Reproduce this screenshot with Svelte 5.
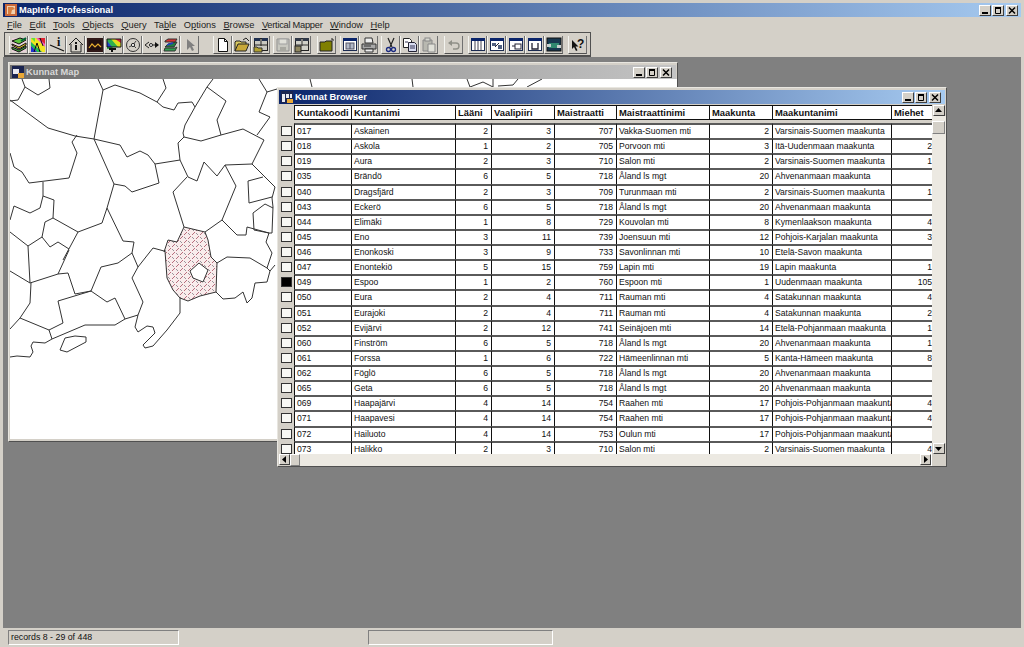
<script>
	const menu = [
		['', 'F', 'ile'], ['', 'E', 'dit'], ['', 'T', 'ools'], ['', 'O', 'bjects'], ['', 'Q', 'uery'],
		['Ta', 'b', 'le'], ['O', 'p', 'tions'], ['', 'B', 'rowse'], ['', 'V', 'ertical Mapper'],
		['', 'W', 'indow'], ['', 'H', 'elp']
	];

	const navy = '#0a246a';
	const win = (inner) =>
		`<rect x="1.5" y="1.5" width="13" height="12" fill="#fff" stroke="#1a2a50"/><rect x="1" y="1" width="14" height="3" fill="${navy}"/>${inner}`;

	const icons = {
		layers: `<rect x="1" y="1" width="14" height="14" fill="#e8d0d8"/><path d="M1 4 9 1l6 2-7 4z" fill="#60c840" stroke="#111"/><path d="M1 7l7 3 7-4v2l-7 4-7-4z" fill="#e8d020" stroke="#111"/><path d="M1 10l7 3 7-4v2l-7 4-7-3z" fill="#40a040" stroke="#111"/><path d="M10 4l5-3" stroke="#063" stroke-width="2"/>`,
		rainbow: `<rect x="1" y="1" width="14" height="14" fill="#f060c0"/><path d="M1 1h5l9 9v5h-3L1 5z" fill="#f0e820"/><path d="M1 5l11 10H7L1 9z" fill="#20c050"/><path d="M1 9l6 6H1z" fill="#2030d0"/><path d="M8 1h7v6z" fill="#e02030"/><path d="M1 1h4v4z" fill="#60e040"/><path d="M4 15 7 6l3 9M10 1l3 8" stroke="#111" fill="none"/>`,
		linei: `<path d="M1 8l14 6" stroke="#111" stroke-width="1.3"/><text x="8" y="9" font-family="Liberation Serif" font-weight="bold" font-size="12" fill="#111">i</text>`,
		house: `<path d="M1 8l7-7 7 7M3 7v8h10V7" fill="none" stroke="#222"/><rect x="7" y="5" width="2" height="2" fill="#111"/><rect x="7" y="8" width="2" height="5" fill="#111"/>`,
		chart: `<rect x="0" y="1" width="16" height="14" fill="#301818"/><rect x="2" y="3" width="12" height="10" fill="#201010"/><path d="M2 11l3-4 3 3 3-3 3 3" fill="none" stroke="#e8b030" stroke-width="1.2"/>`,
		mappin: `<path d="M1 2h14v8H7L5 12H1z" fill="#30b050"/><path d="M5 2h6l4 4v4h-3z" fill="#e0e020"/><path d="M9 2h6v4z" fill="#e02040"/><path d="M1 4l5 6H1z" fill="#2040d0"/><path d="M1 2h14v8H1z" fill="none" stroke="#111"/><path d="M3 11h7v2H7v2H5v-2H3z" fill="#111"/>`,
		circle: `<circle cx="8" cy="8" r="6.5" fill="none" stroke="#333"/><path d="M4 10l4-2 3-4M8 8l3 3" stroke="#444" fill="none"/><circle cx="8" cy="8" r="1.6" fill="#fff" stroke="#222"/>`,
		nodes: `<path d="M5 5 1 8l4 3M5 8h9" fill="none" stroke="#222"/><circle cx="7" cy="8" r="1.5" fill="#fff" stroke="#222"/><path d="M11 5l4 3-4 3z" fill="#111"/>`,
		stack: `<path d="M2 4l3-2h9l-2 3H2z" fill="#d83030" stroke="#333"/><path d="M9 6l5-1-3 5H2l3-3z" fill="#208040" stroke="#333"/><path d="M2 11h10l2-1-2 4H1z" fill="#30a050" stroke="#333"/><path d="M4 8l6-2" stroke="#2040c0" stroke-width="1.5"/>`,
		cursor: `<path d="M5 2v11l3-3 2 4 2-1-2-4h3z" fill="#808080"/>`,
		newdoc: `<path d="M3.500 1.500h6l3 3v10h-9z" fill="#fff" stroke="#111"/><path d="M9.500 1.500v3h3" fill="none" stroke="#111"/>`,
		open: `<path d="M1 14V5l1-1h4l1 1h5v2" fill="#d8c860" stroke="#222"/><path d="M1 14l3-7h11l-3 7z" fill="#c8a838" stroke="#222"/><path d="M9 3l3-2 3 3" fill="none" stroke="#222"/>`,
		works: `<rect x="1.500" y="1.500" width="13" height="12" fill="#c8c8c0" stroke="#222"/><path d="M1 1h6v3H1zM9 1h6v3H9z" fill="#203050"/><path d="M1 8h14" stroke="#222"/><path d="M8 1v8" stroke="#222"/><path d="M1 15v-5h3l1 1h4v4z" fill="#b0a030" stroke="#333"/>`,
		save: `<path d="M2 2h12v12H2z" fill="#c8c8c0" stroke="#909090"/><rect x="4" y="2" width="8" height="5" fill="#e0e0d8" stroke="#a0a0a0"/><rect x="5" y="10" width="6" height="4" fill="#a8a8a0"/>`,
		worksave: `<rect x="1.500" y="1.500" width="13" height="12" fill="#d0d0c8" stroke="#222"/><path d="M1 1h6v3H1zM9 1h6v3H9z" fill="#303848"/><path d="M1 8h14M8 1v8" stroke="#333"/><rect x="1" y="9" width="6" height="6" fill="#908860" stroke="#222"/>`,
		folder: `<path d="M1 14V5h5l1-1h6v10z" fill="#808000" stroke="#222"/><path d="M13 1v2M15 3h-2" stroke="#222"/>`,
		gridwin: win(`<rect x="4" y="6" width="8" height="6" fill="#b0b8c8" stroke="#556"/><path d="M8 6v6" stroke="#556"/>`),
		printer: `<path d="M4 1h7l1 5H4z" fill="#eee" stroke="#333"/><path d="M1 7h14v5H1z" fill="#a8a8a8" stroke="#333"/><path d="M4 12h8v3H4z" fill="#eee" stroke="#333"/><path d="M3 9h7" stroke="#333"/>`,
		scissors: `<path d="M5 1l4 9M11 1 7 10" stroke="#222" stroke-width="1.2"/><circle cx="5.500" cy="12.500" r="2" fill="none" stroke="#1a2a80" stroke-width="1.3"/><circle cx="10.500" cy="12.500" r="2" fill="none" stroke="#1a2a80" stroke-width="1.3"/>`,
		copy: `<path d="M1.500 1.500h6l2 2v7h-8z" fill="#fff" stroke="#222"/><path d="M6.500 5.500h6l2 2v7h-8z" fill="#d8dcf0" stroke="#223"/><path d="M8 9h5M8 11h5M3 5h3" stroke="#335"/>`,
		paste: `<path d="M2 3h9v11H2z" fill="#b8b8b0" stroke="#888"/><rect x="4" y="1" width="5" height="3" fill="#d8d8d0" stroke="#888"/><path d="M7 7h7v8H7z" fill="#e0e0d8" stroke="#888"/>`,
		undo: `<path d="M3 6h7q3 0 3 3t-3 3H7" fill="none" stroke="#909088" stroke-width="1.4"/><path d="M6 3 2 6l4 3z" fill="#909088"/>`,
		win1: win(`<path d="M8 4v9M5 4v9M11 4v9" stroke="#445"/>`),
		win2: win(`<path d="M3 6h4v3H3zM9 8h4v4H9z" fill="#506080"/><path d="M6 10l4-4" stroke="#223"/>`),
		win3: win(`<rect x="7" y="7" width="6" height="5" fill="#fff" stroke="#223"/><path d="M4 9h3" stroke="#223"/>`),
		win4: win(`<path d="M5 6v6h6V6" fill="none" stroke="#223" stroke-width="1.3"/>`),
		win5: `<rect x="1" y="1" width="14" height="13" fill="#183850" stroke="#111"/><rect x="3" y="6" width="10" height="5" fill="#308870"/><rect x="1" y="7" width="4" height="3" fill="#c8d0d0"/><rect x="11" y="8" width="4" height="3" fill="#c8d0d0"/>`,
		help: `<path d="M2 3v9l2-2 2 4 1.500-.8-2-3.700h3z" fill="#111"/><text x="7" y="11" font-family="Liberation Sans" font-weight="bold" font-size="12" fill="#111">?</text>`
	};

	const groups = [
		{ cls: 'g0', items: ['layers', 'rainbow', 'linei', 'house', 'chart', 'mappin', 'circle', 'nodes', 'stack', 'cursor'] },
		{ cls: 'g1', items: ['newdoc', 'open', 'works'] },
		{ cls: 'g2', items: ['save', 'worksave'] },
		{ cls: 'g3', items: ['folder'] },
		{ cls: 'g4', items: ['gridwin', 'printer'] },
		{ cls: 'g5', items: ['scissors', 'copy', 'paste'] },
		{ cls: 'g6', items: ['undo'] },
		{ cls: 'g7', items: ['win1', 'win2', 'win3', 'win4', 'win5'] },
		{ cls: 'g8', items: ['help'] }
	];

	const VS = 'Varsinais-Suomen maakunta';
	const AH = 'Ahvenanmaan maakunta';
	const PP = 'Pohjois-Pohjanmaan maakunta';
	const AL = 'Åland ls mgt';
	const rows = [
		['017', 'Askainen', 2, 3, 707, 'Vakka-Suomen mti', 2, VS, ''],
		['018', 'Askola', 1, 2, 705, 'Porvoon mti', 3, 'Itä-Uudenmaan maakunta', '2'],
		['019', 'Aura', 2, 3, 710, 'Salon mti', 2, VS, '1'],
		['035', 'Brändö', 6, 5, 718, AL, 20, AH, ''],
		['040', 'Dragsfjärd', 2, 3, 709, 'Turunmaan mti', 2, VS, '1'],
		['043', 'Eckerö', 6, 5, 718, AL, 20, AH, ''],
		['044', 'Elimäki', 1, 8, 729, 'Kouvolan mti', 8, 'Kymenlaakson maakunta', '4'],
		['045', 'Eno', 3, 11, 739, 'Joensuun mti', 12, 'Pohjois-Karjalan maakunta', '3'],
		['046', 'Enonkoski', 3, 9, 733, 'Savonlinnan mti', 10, 'Etelä-Savon maakunta', ''],
		['047', 'Enontekiö', 5, 15, 759, 'Lapin mti', 19, 'Lapin maakunta', '1'],
		['049', 'Espoo', 1, 2, 760, 'Espoon mti', 1, 'Uudenmaan maakunta', '105'],
		['050', 'Eura', 2, 4, 711, 'Rauman mti', 4, 'Satakunnan maakunta', '4'],
		['051', 'Eurajoki', 2, 4, 711, 'Rauman mti', 4, 'Satakunnan maakunta', '2'],
		['052', 'Evijärvi', 2, 12, 741, 'Seinäjoen mti', 14, 'Etelä-Pohjanmaan maakunta', '1'],
		['060', 'Finström', 6, 5, 718, AL, 20, AH, '1'],
		['061', 'Forssa', 1, 6, 722, 'Hämeenlinnan mti', 5, 'Kanta-Hämeen maakunta', '8'],
		['062', 'Föglö', 6, 5, 718, AL, 20, AH, ''],
		['065', 'Geta', 6, 5, 718, AL, 20, AH, ''],
		['069', 'Haapajärvi', 4, 14, 754, 'Raahen mti', 17, PP, '4'],
		['071', 'Haapavesi', 4, 14, 754, 'Raahen mti', 17, PP, '4'],
		['072', 'Hailuoto', 4, 14, 753, 'Oulun mti', 17, PP, ''],
		['073', 'Halikko', 2, 3, 710, 'Salon mti', 2, VS, '4']
	];
	const headers = ['Kuntakoodi', 'Kuntanimi', 'Lääni', 'Vaalipiiri', 'Maistraatti', 'Maistraattinimi', 'Maakunta', 'Maakuntanimi', 'Miehet'];
	const numeric = [false, false, true, true, true, false, true, false, true];

	// boundary lines, in page pixels
	const borders = [
		'22,79 25,87 38,95 50,88 49,79', '25,87 18,100 10,101',
		'10,100 48,128 75,136 94,139', '98,79 103,90 94,139',
		'103,90 115,85 140,93 157,102 163,107 174,110 178,103 192,102 195,107 185,125 183,133 184,137',
		'157,102 166,88 163,79', '213,79 207,87 195,107', '207,87 226,101 217,120 221,135',
		'184,137 201,141 221,135 243,129 264,140 252,164 225,165 217,176 204,162 197,181 188,177 180,160 178,143 184,137',
		'259,79 267,92 277,89', '267,92 259,112 270,117 257,135',
		'94,139 120,145 127,157 140,151 148,155 155,164 159,183 132,192 125,186 114,184 94,139', '155,164 180,160',
		'77,135 72,142 77,153 69,178 29,183 22,172 14,167 10,153',
		'43,182 43,196 54,200 53,218', '43,196 40,208 30,213 14,206 10,220',
		'114,184 107,208 102,223 78,232 63,260', '53,218 78,232', '53,218 45,222 42,237 28,246 10,232',
		'42,237 50,247 58,242 69,249', '107,208 123,241 134,242 132,253',
		'28,246 30,283', '10,271 30,283 58,274 68,273 75,294 91,291 107,302 115,298 125,319 138,315',
		'58,274 69,250', '91,291 101,267 118,263 132,253 138,267',
		'138,267 132,278 143,302 138,315', '138,267 153,248 164,251', '91,291 58,301 63,323 49,330 20,318 30,303 31,283',
		'20,318 10,329', '49,330 52,339',
		'10,357 17,356 30,357 33,352 31,346 33,342 45,343 52,339 85,325 103,325 115,325 125,319',
		'138,315 135,327 138,332 147,326 153,327 155,333 143,345 145,348 153,346 167,330 180,313 180,298',
		'173,192 187,177', '173,192 184,227', '205,232 222,220 236,186 225,165',
		'252,164 275,187 272,198 273,207 272,233 269,233 247,227 246,235 237,235 222,220',
		'248,181 263,177', '248,181 249,203 272,197', '253,213 265,204 273,208', '253,213 254,230 269,233',
		'269,233 266,242 272,253 267,268', '217,263 227,257 250,258 267,268 270,271 275,265',
		'270,271 267,282 255,283 252,298 247,303 243,292 235,298 223,299 216,292',
		'310,79 312,87', '412,79 413,87', '467,79 470,87 483,82 493,87', '493,79 493,87', '498,86 513,85 518,79', '527,87 542,79'
	];
	const island = '60,350 65,338 75,336 86,337 86,342 67,352';
	const espoo = '184,227 205,232 208,240 211,257 217,263 216,292 200,296 188,301 180,298 173,290 167,278 165,251 164,252 168,240 177,242';
	const hole = '199,263 208,270 203,282 193,278 190,271';
</script>

{#snippet controls()}
	<div class="controls">
		<span class="ctl"><svg viewBox="0 0 10 9"><rect x="2" y="6" width="6" height="2" fill="#000" /></svg></span>
		<span class="ctl gapped"><svg viewBox="0 0 10 9"><path d="M2.500 1.500h5v6h-5z" fill="none" stroke="#000" /><rect x="2" y="1" width="6" height="2" fill="#000" /></svg></span>
		<span class="ctl closer"><svg viewBox="0 0 10 9"><path d="M2 1.500 8 7.500M8 1.500 2 7.500" stroke="#000" stroke-width="1.5" /></svg></span>
	</div>
{/snippet}

<div class="app">
	<div class="titlebar active">
		<svg class="appicon" viewBox="0 0 12 12">
			<rect width="12" height="12" fill="#c8683a" />
			<path d="M2 2h8v8H2z" fill="#f0d0b0" />
			<path d="M3 10V3h5l2 2-3 1-1 4z" fill="#d88040" />
		</svg>
		<span class="title-text">MapInfo Professional</span>
		{@render controls()}
	</div>

	<div class="menu">
		{#each menu as m}
			<span>{m[0]}<u>{m[1]}</u>{m[2]}</span>
		{/each}
	</div>

	<div class="toolbar">
		{#each groups as g}
			<div class="group {g.cls}">
				{#each g.items as name}
					<span class="tool">
						<svg viewBox="0 0 16 16" width="16" height="16">{@html icons[name]}</svg>
					</span>
				{/each}
			</div>
		{/each}
	</div>

	<div class="mdi">
		<div class="window map-window">
			<div class="titlebar inactive">
				<svg class="winicon" viewBox="0 0 12 12">
					<rect width="12" height="12" fill="#1a2450" />
					<path d="M1 3h6v5H1z" fill="#e8e8f0" />
					<path d="M6 7h6v5H6z" fill="#e8a838" />
				</svg>
				<span class="title-text dim">Kunnat Map</span>
				{@render controls()}
			</div>
			<svg class="canvas" viewBox="10 79 667 360" width="667" height="360">
				<defs>
					<pattern id="hatch" width="8" height="8" patternUnits="userSpaceOnUse">
						<rect width="8" height="8" fill="#f9ecec" />
						<path d="M0 3l3-3M4 7l3-3" stroke="#b06070" stroke-width="0.9" />
						<path d="M4 1l2 2M0 5l2 2" stroke="#707078" stroke-width="0.7" />
					</pattern>
				</defs>
				<polygon points={espoo} fill="url(#hatch)" stroke="#333" />
				<polygon points={hole} fill="#fff" stroke="#333" />
				<polygon points={island} fill="none" stroke="#333" />
				{#each borders as line}
					<polyline points={line} fill="none" stroke="#333" />
				{/each}
			</svg>
		</div>

		<div class="window browser-window">
			<div class="titlebar active">
				<svg class="winicon" viewBox="0 0 12 12">
					<rect width="12" height="12" fill="#1a2450" />
					<path d="M1 3h3v8H1zM5 3h3v4H5zM9 3h2v4H9z" fill="#e8e8f0" />
					<path d="M6 8h6v4H6z" fill="#e8a838" />
				</svg>
				<span class="title-text">Kunnat Browser</span>
				{@render controls()}
			</div>
			<div class="browser-body">
				<div class="table">
					<div class="row head">
						<span class="marker-cell"></span>
						{#each headers as h}
							<span class="cell">{h}</span>
						{/each}
					</div>
					<div class="rows">
						{#each rows as r}
							<div class="row">
								<span class="marker-cell">
									<i class="marker" class:selected={r[0] === '049'}></i>
								</span>
								{#each r as value, i}
									<span class="cell" class:num={numeric[i]}>{value}</span>
								{/each}
							</div>
						{/each}
					</div>
				</div>
				<div class="vscroll">
					<span class="sbtn"><svg viewBox="0 0 9 9"><path d="M4.500 2 8 6H1z" fill="#000" /></svg></span>
					<div class="vtrack"><span class="vthumb"></span></div>
					<span class="sbtn"><svg viewBox="0 0 9 9"><path d="M4.500 7 8 3H1z" fill="#000" /></svg></span>
				</div>
			</div>
			<div class="hscroll">
				<span class="sbtn"><svg viewBox="0 0 9 9"><path d="M2 4.500 6 1v7z" fill="#000" /></svg></span>
				<div class="htrack"><span class="hthumb"></span></div>
				<span class="sbtn"><svg viewBox="0 0 9 9"><path d="M7 4.500 3 1v7z" fill="#000" /></svg></span>
				<span class="corner"></span>
			</div>
		</div>
	</div>

	<div class="status">
		<span class="panel first">records 8 - 29 of 448</span>
		<span class="panel second"></span>
	</div>
</div>

<style>
	:global(body) {
		margin: 0;
		background: #d4d0c8;
	}
	.app {
		width: 1024px;
		height: 647px;
		box-sizing: border-box;
		padding: 3px 3px 0;
		display: flex;
		flex-direction: column;
		overflow: hidden;
		background: #d4d0c8;
		font-family: 'Liberation Sans', Arial, sans-serif;
		color: #111;
	}
	.titlebar {
		display: flex;
		align-items: center;
		flex: none;
		height: 14px;
		padding-left: 2px;
		color: #fff;
	}
	.titlebar.active {
		background: linear-gradient(90deg, #0a246a, #a6caf0);
	}
	.titlebar.inactive {
		background: linear-gradient(90deg, #6e6e6e, #c4c4c4);
	}
	.title-text {
		font-size: 9.3px;
		font-weight: bold;
		margin-left: 2px;
	}
	.title-text.dim {
		color: #d8d8d8;
	}
	.appicon {
		width: 12px;
		height: 12px;
		flex: none;
	}
	.winicon {
		width: 12px;
		height: 12px;
		flex: none;
	}
	.controls {
		margin-left: auto;
		margin-right: 3px;
		display: flex;
	}
	.window .controls {
		margin-right: 4px;
	}
	.ctl {
		width: 12px;
		height: 11px;
		box-sizing: border-box;
		background: #d4d0c8;
		border: 1px solid;
		border-color: #fff #404040 #404040 #fff;
		display: flex;
		overflow: hidden;
	}
	.ctl svg {
		flex: none;
		width: 10px;
		height: 9px;
	}
	.ctl.gapped {
		margin-left: 1px;
	}
	.ctl.closer {
		margin-left: 2px;
	}
	.menu {
		flex: none;
		height: 15px;
		display: flex;
		align-items: center;
		gap: 7.5px;
		padding-left: 4px;
		font-size: 9.3px;
		color: #222;
	}
	.menu span:nth-child(9) {
		letter-spacing: -0.27px;
	}
	.toolbar {
		flex: none;
		width: 587px;
		height: 25px;
		box-sizing: border-box;
		margin-left: 1px;
		padding: 3px 0 0 4px;
		display: flex;
		border: 1px solid #505050;
		border-bottom-width: 2px;
	}
	.group {
		display: flex;
		height: 18px;
	}
	.g1 { margin-left: 14px; }
	.g2 { margin-left: 3px; }
	.g3 { margin-left: 6px; }
	.g4 { margin-left: 4px; }
	.g5 { margin-left: 3px; }
	.g6 { margin-left: 6px; }
	.g7 { margin-left: 5px; }
	.g8 { margin-left: 5px; }
	.tool {
		width: 19px;
		height: 18px;
		box-sizing: border-box;
		padding: 0 0 0 1px;
		background: #d4d0c8;
		border-right: 1px solid #707070;
		border-bottom: 1px solid #505050;
		border-left: 1px solid #f4f4f0;
		display: flex;
		align-items: center;
	}
	.mdi {
		flex: 1;
		position: relative;
		background: #808080;
	}
	.window {
		position: absolute;
		box-sizing: border-box;
		width: 670px;
		height: 380px;
		padding: 2px 1px 1px;
		background: #d4d0c8;
		border: 1px solid;
		border-color: #e8e6e0 #505050 #505050 #e8e6e0;
		display: flex;
		flex-direction: column;
	}
	.map-window {
		left: 5px;
		top: 5px;
	}
	.browser-window {
		left: 274px;
		top: 30px;
	}
	.canvas {
		display: block;
		flex: none;
		background: #fff;
	}
	.browser-body {
		flex: none;
		display: flex;
		height: 349px;
		margin-top: 1px;
	}
	.table {
		width: 653px;
		flex: none;
		overflow: hidden;
	}
	.row {
		display: grid;
		grid-template-columns: 15px 57px 104px 36px 63px 62px 93px 63px 119px 41px;
		height: 15.14px;
		font-size: 8.6px;
		line-height: 13px;
	}
	.row.head {
		height: 15px;
		margin-bottom: 3px;
		font-weight: bold;
		font-size: 9.4px;
	}
	.cell {
		background: #fff;
		border-left: 1px solid #111;
		border-top: 2px solid #5a5a5a;
		padding: 0 3px 0 2px;
		white-space: nowrap;
		overflow: hidden;
		box-sizing: border-box;
	}
	.row.head .cell {
		border-bottom: 1px solid #111;
		border-top: 1px solid #111;
		line-height: 13px;
	}
	.cell.num {
		text-align: right;
	}
	.cell:last-child {
		padding-right: 0;
	}
	.marker-cell {
		background: #d4d0c8;
		padding: 3px 0 0 2px;
	}
	.marker {
		display: block;
		width: 11px;
		height: 10px;
		box-sizing: border-box;
		border: 1px solid #333;
		background: #f8f8f4;
	}
	.marker.selected {
		background: #000;
	}
	.vscroll {
		flex: none;
		width: 14px;
		display: flex;
		flex-direction: column;
	}
	.sbtn {
		flex: none;
		width: 11px;
		height: 11px;
		box-sizing: border-box;
		background: #d4d0c8;
		border: 1px solid;
		border-color: #fff #404040 #404040 #fff;
		display: flex;
	}
	.vscroll .sbtn {
		margin-left: 1px;
		width: 12px;
	}
	.sbtn svg {
		width: 9px;
		height: 9px;
		flex: none;
	}
	.vtrack {
		flex: 1;
		background: #ece9e2;
		padding-top: 5px;
	}
	.vthumb {
		display: block;
		width: 13px;
		height: 13px;
		box-sizing: border-box;
		background: #d4d0c8;
		border: 1px solid;
		border-color: #fff #808080 #808080 #fff;
	}
	.hscroll {
		flex: none;
		display: flex;
		height: 12px;
	}
	.htrack {
		flex: 1;
		background: #ece9e2;
	}
	.hthumb {
		display: block;
		width: 10px;
		height: 12px;
		box-sizing: border-box;
		background: #d4d0c8;
		border: 1px solid;
		border-color: #fff #808080 #808080 #fff;
	}
	.corner {
		width: 14px;
		flex: none;
		border-left: 1px solid #fff;
		box-sizing: border-box;
	}
	.status {
		flex: none;
		height: 19px;
		display: flex;
		padding: 2px 0 0 5px;
		box-sizing: border-box;
		font-size: 8.8px;
	}
	.panel {
		height: 15px;
		box-sizing: border-box;
		border: 1px solid;
		border-color: #808080 #fff #fff #808080;
		padding-left: 2px;
		line-height: 12px;
	}
	.panel.first {
		width: 171px;
	}
	.panel.second {
		width: 185px;
		margin-left: 189px;
	}
</style>
